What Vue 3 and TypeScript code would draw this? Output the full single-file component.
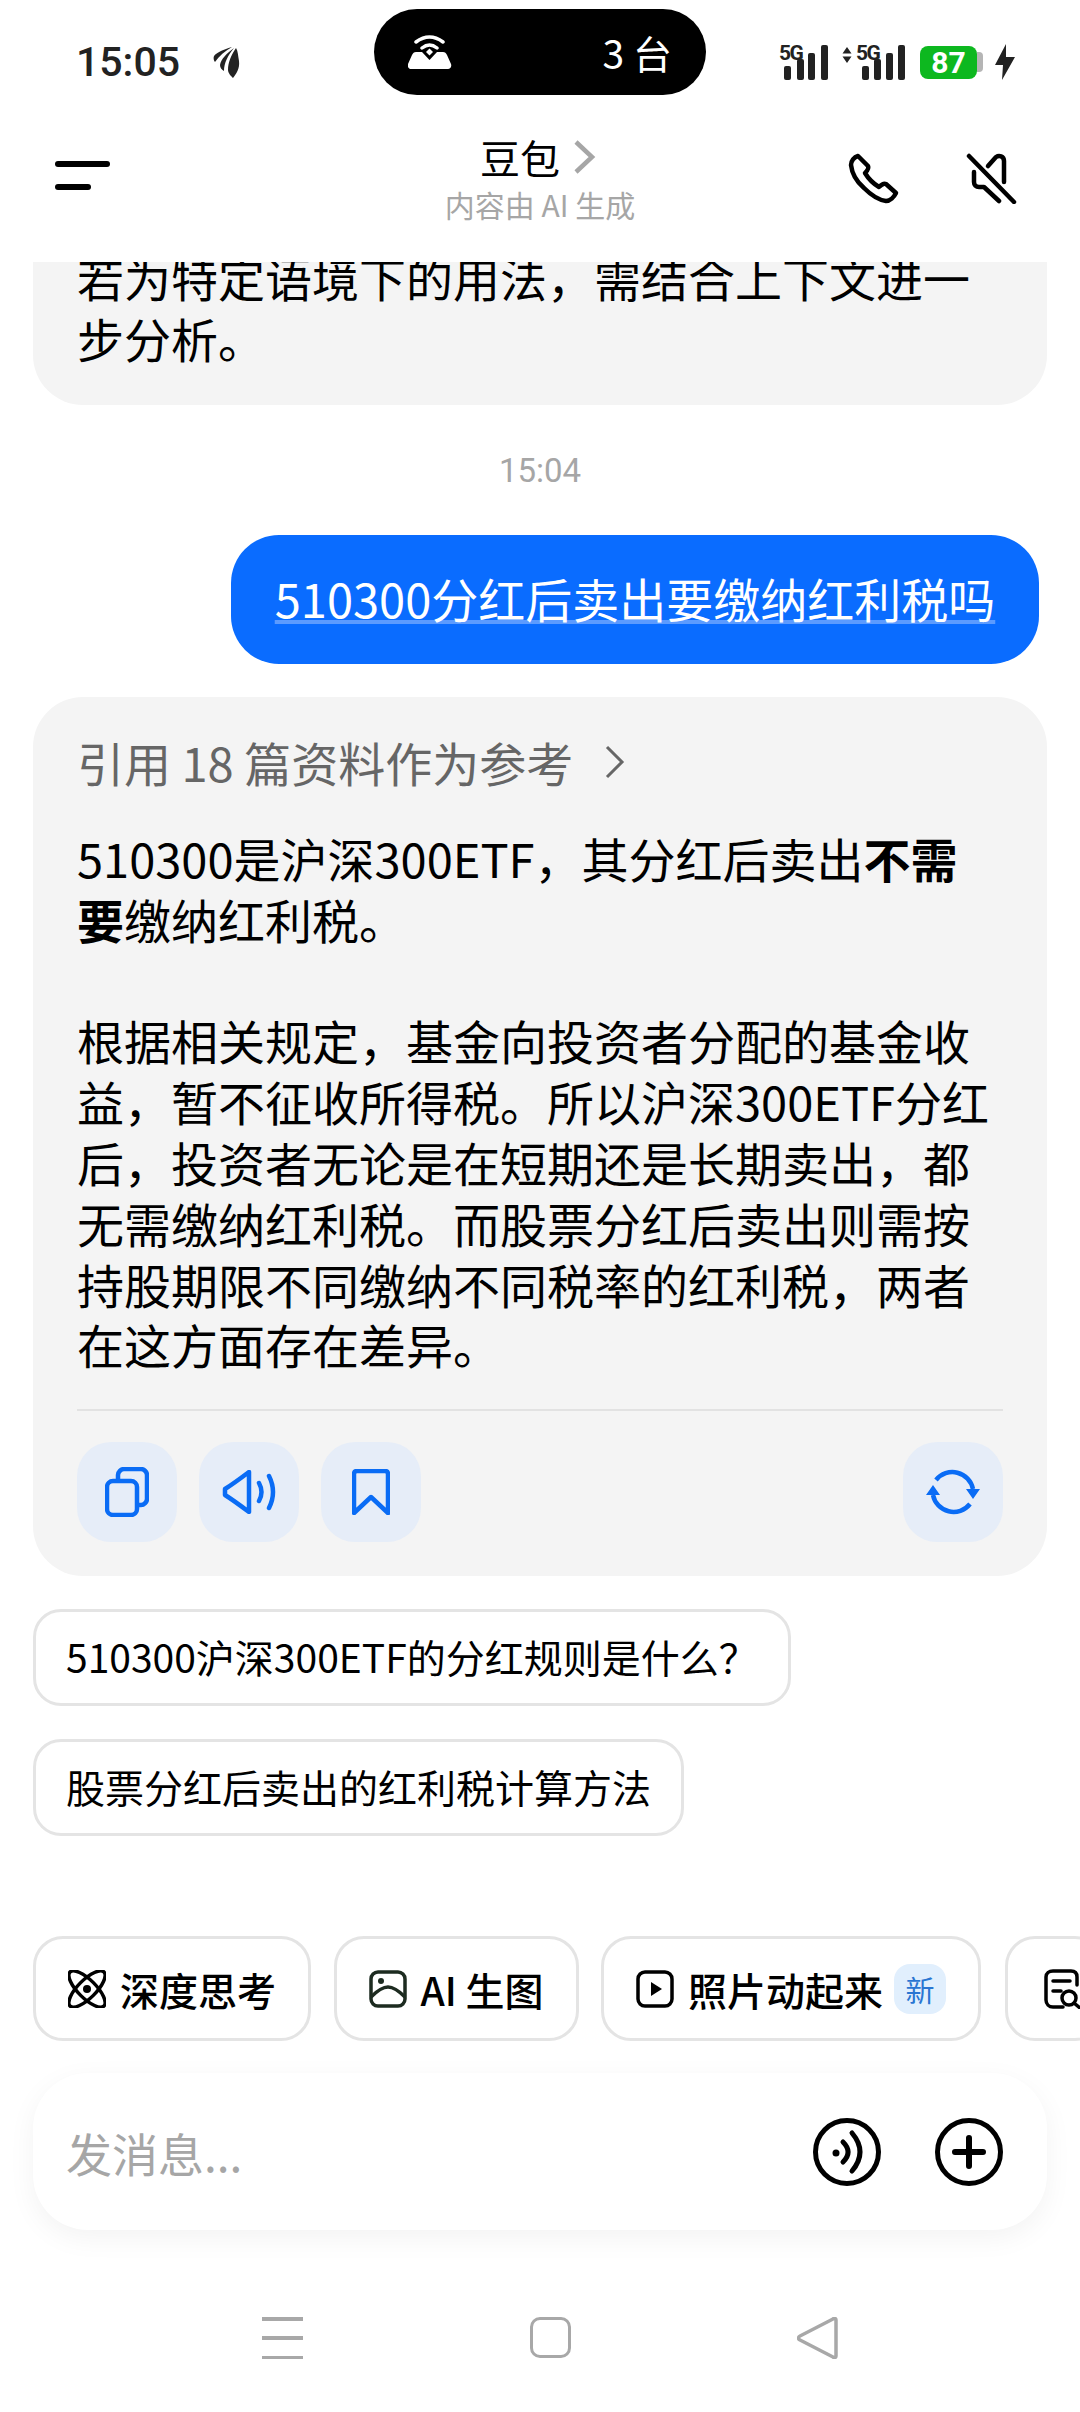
<script setup lang="ts">
const answerLines = [
  '根据相关规定，基金向投资者分配的基金收',
  '益，暂不征收所得税。所以沪深300ETF分红',
  '后，投资者无论是在短期还是长期卖出，都',
  '无需缴纳红利税。而股票分红后卖出则需按',
  '持股期限不同缴纳不同税率的红利税，两者',
  '在这方面存在差异。'
];
const suggestions = ['510300沪深300ETF的分红规则是什么？', '股票分红后卖出的红利税计算方法'];
</script>

<template>
  <div class="phone">
    <!-- 状态栏 -->
    <div class="status">
      <div class="status-left">
        <span class="time">15:05</span>
        <svg class="leaf" viewBox="0 0 28 32" width="28" height="32" fill="#222">
          <path d="M19 1C12 3 4 6 1 10c-1 2 0 5 1 6 4-6 10-11 17-15z" />
          <path d="M21 2C14 7 8 13 7 19c0 3 2 5 4 6 0-8 4-16 10-23z" />
          <path d="M23 2c-5 7-8 15-8 22 0 3 3 6 5 8 3-4 7-9 6-17-1-5-1-10-3-13z" />
        </svg>
      </div>
      <div class="pill">
        <svg viewBox="0 0 44 34" width="44" height="34" fill="none">
          <path d="M8 7Q21.500-3 35 7M14 13Q21.500 7 29 13" stroke="#fff" stroke-width="3.500" stroke-linecap="round" />
          <path d="M21.500 13.500l3.500 3.500-3.500 3.500-3.500-3.500z" fill="#fff" />
          <path d="M8 17h6l7.500 8 7.500-8h6c2 0 3 1 4 3l4 9c1 3-1 5-3 5H3c-2 0-4-2-3-5l4-9c1-2 2-3 4-3z" fill="#fff" />
        </svg>
        <span class="pill-text">3 台</span>
      </div>
      <div class="status-right">
        <svg viewBox="0 0 50 36" width="50" height="36" class="sig">
          <text x="0" y="16" class="sig-text">5G</text>
          <rect x="5" y="22" width="7" height="14" rx="2" /><rect x="18" y="15" width="7" height="21" rx="2" />
          <rect x="29" y="9" width="7" height="27" rx="2" /><rect x="42" y="1" width="7" height="35" rx="2" />
        </svg>
        <svg viewBox="0 0 10 16" width="10" height="16" class="updown">
          <path d="M5 0l4.500 6.500h-9zM5 16L.5 9.500h9z" />
        </svg>
        <svg viewBox="0 0 50 36" width="50" height="36" class="sig sig-second">
          <text x="0" y="16" class="sig-text">5G</text>
          <rect x="6" y="22" width="7" height="14" rx="2" /><rect x="18" y="15" width="7" height="21" rx="2" />
          <rect x="30" y="9" width="7" height="27" rx="2" /><rect x="42" y="1" width="7" height="35" rx="2" />
        </svg>
        <div class="battery">
          <span class="battery-body">87</span>
          <span class="battery-cap"></span>
        </div>
        <svg class="bolt" viewBox="0 0 20 36" width="20" height="36">
          <path d="M11 0L0 21h8l-1 15L20 13h-9z" fill="#222" />
        </svg>
      </div>
    </div>

    <!-- 顶部导航 -->
    <div class="header">
      <div class="menu-btn">
        <span class="bar-long"></span>
        <span class="bar-short"></span>
      </div>
      <div class="title-block">
        <div class="title">
          <span>豆包</span>
          <svg viewBox="0 0 24 34" width="24" height="34" fill="none">
            <path d="M3 2l16 15L3 32" stroke="#a6a6a6" stroke-width="4.500" />
          </svg>
        </div>
        <div class="subtitle">内容由 AI 生成</div>
      </div>
      <div class="header-actions">
        <svg viewBox="0 0 52 52" width="52" height="52" fill="none" stroke="#000" stroke-width="4.500" stroke-linejoin="round">
          <path d="M10 4C6 5 3 9 3 13c1 9 6 17 13 23 7 7 14 12 22 13 4 0 8-4 10-8L38 32c-2-1-5 1-7 3-5-3-11-9-14-14 2-2 4-5 3-7z" />
        </svg>
        <svg viewBox="0 0 52 52" width="52" height="52" fill="none" stroke="#000" stroke-width="4.500" stroke-linejoin="round" stroke-linecap="round">
          <path d="M3 4l45 46" />
          <path d="M22 14l8-9c3-2 8-1 8 4v21" />
          <path d="M8 20v10c0 3 2 5 5 5h5l15 14" />
        </svg>
      </div>
    </div>

    <!-- 消息列表 -->
    <div class="messages">
      <div class="card card-top">
        <p class="line first-line">若为特定语境下的用法，需结合上下文进一</p>
        <p class="line">步分析。</p>
      </div>

      <div class="stamp">15:04</div>

      <div class="user-row">
        <div class="user-bubble"><span class="user-text">510300分红后卖出要缴纳红利税吗</span></div>
      </div>

      <div class="card card-answer">
        <div class="refs">
          <span>引用 18 篇资料作为参考</span>
          <svg viewBox="0 0 20 34" width="20" height="34" fill="none">
            <path d="M2 2l15 15L2 32" stroke="#666" stroke-width="3" />
          </svg>
        </div>
        <p class="line">510300是沪深300ETF，其分红后卖出<b>不需</b></p>
        <p class="line"><b>要</b>缴纳红利税。</p>
        <p class="line">&nbsp;</p>
        <p v-for="l in answerLines" :key="l" class="line">{{ l }}</p>
        <div class="divider"></div>
        <div class="actions">
          <button class="act">
            <svg viewBox="0 0 44 50" width="44" height="50" fill="none" stroke="#0a6cf5" stroke-width="4.500">
              <rect x="2" y="14" width="30" height="34" rx="6" />
              <path d="M13 14V8c0-3 3-6 6-6h17c3 0 6 3 6 6v24c0 3-3 6-6 6h-4" />
            </svg>
          </button>
          <button class="act">
            <svg viewBox="0 0 54 44" width="54" height="44" fill="none" stroke="#0a6cf5" stroke-width="4.500" stroke-linecap="round" stroke-linejoin="round">
              <path d="M27 2C19 8 11 14 3 19v6c8 5 16 11 24 17z" />
              <path d="M37 13q5 9 0 18M47 6q8 16 0 32" />
            </svg>
          </button>
          <button class="act">
            <svg viewBox="0 0 38 46" width="38" height="46" fill="none" stroke="#0a6cf5" stroke-width="4.500" stroke-linejoin="round">
              <path d="M2 5c0-2 1-3 3-3h28c2 0 3 1 3 3v39L19 28 2 44z" />
            </svg>
          </button>
          <button class="act act-last">
            <svg viewBox="0 0 54 46" width="54" height="46" fill="none" stroke="#0a6cf5" stroke-width="4.500">
              <path d="M10 11A21 21 0 0 1 47 20" />
              <path d="M44 35A21 21 0 0 1 7 26" />
              <path d="M0 26h14L7 16zM40 20h14L47 30z" fill="#0a6cf5" stroke="none" />
            </svg>
          </button>
        </div>
      </div>

      <div class="suggest-list">
        <div v-for="s in suggestions" :key="s" class="suggest">{{ s }}</div>
      </div>
    </div>

    <!-- 功能入口 -->
    <div class="tools">
      <div class="tool">
        <svg viewBox="0 0 38 38" width="38" height="38" fill="none" stroke="#000" stroke-width="3.500">
          <ellipse cx="19" cy="19" rx="9" ry="24" transform="rotate(45 19 19)" />
          <ellipse cx="19" cy="19" rx="9" ry="24" transform="rotate(-45 19 19)" />
          <circle cx="19" cy="19" r="4" fill="#000" stroke="none" />
        </svg>
        <span>深度思考</span>
      </div>
      <div class="tool">
        <svg viewBox="0 0 38 38" width="38" height="38" fill="none" stroke="#1d2b20" stroke-width="3.500" stroke-linejoin="round">
          <rect x="2" y="2" width="34" height="34" rx="7" />
          <circle cx="12" cy="11" r="3" fill="#1d2b20" stroke="none" />
          <path d="M2 27c6-6 11-10 17-10s11 4 17 10" />
        </svg>
        <span>AI 生图</span>
      </div>
      <div class="tool">
        <svg viewBox="0 0 38 38" width="38" height="38" fill="none" stroke="#000" stroke-width="3.500">
          <rect x="2" y="2" width="34" height="34" rx="7" />
          <path d="M15 12l11 7-11 7z" fill="#000" stroke="none" />
        </svg>
        <span>照片动起来</span>
        <span class="tag">新</span>
      </div>
      <div class="tool tool-cut">
        <svg viewBox="0 0 44 40" width="44" height="40" fill="none" stroke="#000" stroke-width="3.500" stroke-linecap="round">
          <path d="M20 38H10c-4 0-7-3-7-7V8c0-4 3-6 7-6h18c4 0 6 2 6 6v8" />
          <path d="M10 12h17M10 22h8" />
          <circle cx="26" cy="29" r="7" />
          <path d="M31 34l6 5" />
        </svg>
      </div>
    </div>

    <!-- 输入框 -->
    <div class="input-box">
      <span class="placeholder">发消息...</span>
      <svg viewBox="0 0 68 68" width="68" height="68" fill="none" stroke="#000" stroke-width="5">
        <circle cx="34" cy="34" r="31.500" />
        <circle cx="23" cy="35" r="3.500" fill="#000" stroke="none" />
        <path d="M30 24q10 10 0 20M39 15q16 19 0 38" stroke-linecap="round" />
      </svg>
      <svg viewBox="0 0 68 68" width="68" height="68" fill="none" stroke="#000" stroke-width="5">
        <circle cx="34" cy="34" r="31.500" />
        <path d="M34 20v28M20 34h28" stroke-linecap="round" stroke-width="6" />
      </svg>
    </div>

    <!-- 系统导航 -->
    <div class="nav">
      <div class="nav-menu"><span></span><span></span><span></span></div>
      <div class="nav-home"></div>
      <svg viewBox="0 0 42 42" width="42" height="42" fill="none" stroke="#a8a8a8" stroke-width="3.500" stroke-linejoin="round">
        <path d="M39 3v36c0 2-2 2-3 1L3 23c-2-1-2-3 0-4L36 2c1-1 3-1 3 1z" />
      </svg>
    </div>
  </div>
</template>

<style>
html,
body {
  margin: 0;
  background: #fff;
}
</style>

<style scoped>
.phone {
  width: 1080px;
  height: 2412px;
  overflow: hidden;
  display: flex;
  flex-direction: column;
  background: #fff;
  color: #000;
  font-family: "Noto Sans CJK SC", "Noto Sans", sans-serif;
}
p {
  margin: 0;
}

.status {
  height: 95px;
  padding: 9px 0 0 76px;
  box-sizing: border-box;
  display: flex;
  align-items: flex-start;
}
.status-left {
  width: 298px;
  height: 86px;
  margin-top: 10px;
  display: flex;
  align-items: center;
  gap: 33px;
  flex-shrink: 0;
}
.time {
  font-family: Roboto, sans-serif;
  font-weight: 500;
  font-size: 41px;
  color: #222;
}
.pill {
  width: 332px;
  height: 86px;
  padding: 0 34px 0 34px;
  box-sizing: border-box;
  border-radius: 43px;
  background: #000;
  display: flex;
  align-items: center;
  justify-content: space-between;
  flex-shrink: 0;
}
.pill-text {
  color: #fff;
  font-size: 39px;
}
.status-right {
  height: 86px;
  margin: 10px 0 0 73px;
  display: flex;
  align-items: center;
}
.status-right > * {
  flex-shrink: 0;
}
.sig {
  fill: #222;
}
.sig-second {
  margin-left: 4px;
}
.sig-text {
  font-family: Roboto, sans-serif;
  font-weight: 700;
  font-size: 21px;
  letter-spacing: -1.5px;
}
.updown {
  fill: #222;
  margin: 0 0 14px 13px;
}
.battery {
  display: flex;
  align-items: center;
  margin-left: 14px;
}
.battery-body {
  width: 57px;
  height: 33px;
  border-radius: 8px;
  background: #0db81f;
  color: #fff;
  font-family: Roboto, sans-serif;
  font-weight: 700;
  font-size: 30px;
  line-height: 33px;
  text-align: center;
}
.battery-cap {
  width: 6px;
  height: 20px;
  background: #b5b5b5;
  border-radius: 0 4px 4px 0;
}
.bolt {
  margin-left: 12px;
}

.header {
  height: 167px;
  padding: 0 55px;
  box-sizing: border-box;
  display: grid;
  grid-template-columns: 1fr auto 1fr;
  align-items: center;
}
.menu-btn {
  display: flex;
  flex-direction: column;
  gap: 17px;
  margin-top: -7px;
}
.bar-long,
.bar-short {
  display: block;
  height: 6px;
  border-radius: 3px;
  background: #000;
  width: 55px;
}
.bar-short {
  width: 36px;
}
.title-block {
  text-align: center;
  margin-top: -4px;
}
.title {
  display: flex;
  align-items: center;
  justify-content: center;
  gap: 13px;
  font-size: 40px;
  line-height: 54px;
  padding-right: 3px;
}
.subtitle {
  font-size: 30px;
  line-height: 40px;
  color: #a6a6a6;
}
.header-actions {
  display: flex;
  justify-content: flex-end;
  gap: 66px;
  padding-right: 7px;
  margin-top: -2px;
}

.messages {
  flex: 1;
  min-height: 0;
  padding: 0 33px;
}
.card {
  background: #f4f4f4;
  border-radius: 50px;
  padding: 0 44px;
}
.card-top {
  border-radius: 0 0 50px 50px;
  height: 143px;
  box-sizing: border-box;
  overflow: hidden;
}
.first-line {
  margin-top: -15px;
}
.line {
  font-size: 47px;
  line-height: 60.8px;
  white-space: nowrap;
}
.line b {
  font-weight: 700;
}
.stamp {
  margin-top: 44px;
  font-family: Roboto, sans-serif;
  font-size: 33px;
  line-height: 44px;
  color: #a6a6a6;
  text-align: center;
}
.user-row {
  margin-top: 42px;
  display: flex;
  justify-content: flex-end;
  padding-right: 8px;
}
.user-bubble {
  width: 808px;
  height: 129px;
  box-sizing: border-box;
  padding-bottom: 4px;
  border-radius: 48px;
  background: #0a6cff;
  color: #fff;
  display: flex;
  align-items: center;
  justify-content: center;
}
.user-text {
  font-size: 47px;
  line-height: 62px;
  white-space: nowrap;
  text-decoration: underline;
  text-decoration-color: #5c9bff;
  text-decoration-thickness: 4px;
  text-underline-offset: 2px;
}
.card-answer {
  margin-top: 33px;
  height: 879px;
  box-sizing: border-box;
  padding-top: 34px;
}
.refs {
  display: flex;
  align-items: center;
  gap: 32px;
  font-size: 47px;
  line-height: 62px;
  color: #666;
  margin-bottom: 35px;
}
.divider {
  height: 2px;
  background: #e2e2e2;
  margin-top: 34px;
}
.actions {
  display: flex;
  gap: 22px;
  margin-top: 31px;
}
.act {
  width: 100px;
  height: 100px;
  border: 0;
  padding: 0;
  border-radius: 34px;
  background: #e6edf8;
  display: flex;
  align-items: center;
  justify-content: center;
}
.act-last {
  margin-left: auto;
}
.suggest-list {
  margin-top: 33px;
  display: flex;
  flex-direction: column;
  align-items: flex-start;
  gap: 33px;
}
.suggest {
  height: 97px;
  box-sizing: border-box;
  padding: 0 30px;
  border: 3px solid #e4e4e4;
  border-radius: 28px;
  font-size: 39px;
  line-height: 89px;
  white-space: nowrap;
}

.tools {
  display: flex;
  gap: 22.500px;
  padding-left: 33px;
  height: 105px;
  margin-bottom: 32px;
}
.tool {
  flex-shrink: 0;
  box-sizing: border-box;
  height: 105px;
  padding: 0 32px;
  border: 3px solid #e4e4e4;
  border-radius: 30px;
  display: flex;
  align-items: center;
  gap: 14px;
  font-size: 39px;
  font-weight: 500;
  white-space: nowrap;
}
.tool svg {
  flex-shrink: 0;
}
.tool .tag {
  width: 52px;
  height: 50px;
  border-radius: 16px;
  background: #e1effd;
  color: #2a76d2;
  font-size: 29px;
  font-weight: 400;
  line-height: 50px;
  text-align: center;
  margin-left: -3px;
}
.tool-cut {
  width: 100px;
  padding-left: 35px;
  margin-left: 1.500px;
}

.input-box {
  margin: 0 33px;
  height: 157px;
  box-sizing: border-box;
  padding: 0 44px 0 33px;
  border-radius: 55px;
  background: #fff;
  box-shadow: 0 8px 28px rgba(0, 0, 0, 0.05);
  display: flex;
  align-items: center;
  gap: 54px;
}
.placeholder {
  flex: 1;
  font-size: 46px;
  color: #a6a6a6;
}

.nav {
  height: 182px;
  padding: 87px 241px 0 262px;
  box-sizing: border-box;
  display: flex;
  justify-content: space-between;
  align-items: flex-start;
}
.nav-menu {
  width: 41px;
  height: 42px;
  display: flex;
  flex-direction: column;
  justify-content: space-between;
}
.nav-menu span {
  display: block;
  height: 3.500px;
  background: #a8a8a8;
}
.nav-home {
  width: 41px;
  height: 41px;
  box-sizing: border-box;
  border: 3.500px solid #a8a8a8;
  border-radius: 10px;
}
</style>
